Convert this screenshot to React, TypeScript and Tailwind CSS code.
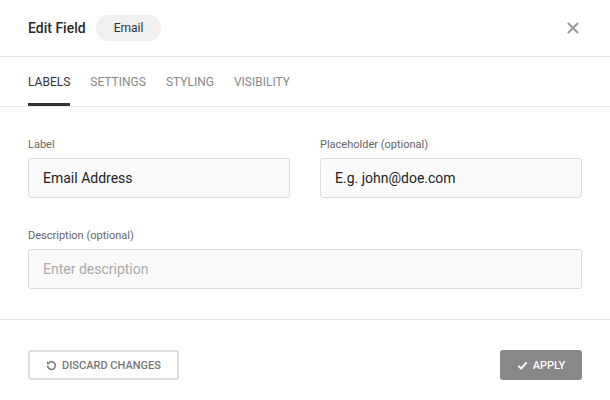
import * as React from "react"

export default function App() {
  return (
    <div className="w-[610px] h-[400px] bg-white text-[#333] font-[Roboto,sans-serif]">
      <div className="h-[57px] flex items-center justify-between px-[28px] border-b border-[#e6e6e6]">
        <div className="flex items-center gap-[10px]">
          <span className="text-[14px] leading-[16px] font-medium text-[#2a2a2a]">Edit Field</span>
          <span className="h-[26px] px-[18px] rounded-full bg-[#f0f0f0] text-[12px] leading-[14px] flex items-center text-[#333]">Email</span>
        </div>
        <svg width="12" height="12" viewBox="0 0 12 12" className="mr-[3px]">
          <path d="M1.5 1.5L10.5 10.5M10.5 1.5L1.5 10.5" stroke="#999" strokeWidth="2" strokeLinecap="round" />
        </svg>
      </div>
      <div className="h-[50px] flex gap-[20px] px-[28px] border-b border-[#e6e6e6] text-[12px] leading-[14px]">
        <div className="flex items-center border-b-[3px] border-[#333] pt-[3px] text-[#333]">LABELS</div>
        <div className="flex items-center text-[#888]">SETTINGS</div>
        <div className="flex items-center text-[#888]">STYLING</div>
        <div className="flex items-center text-[#888]">VISIBILITY</div>
      </div>
      <div className="px-[28px] pt-[31px] pb-[30px] border-b border-[#e6e6e6]">
        <div className="grid grid-cols-2 gap-[30px]">
          <div>
            <div className="text-[11px] leading-[13px] text-[#666] mb-[7px]">Label</div>
            <div className="h-[40px] rounded-[3px] border border-[#ddd] bg-[#fafafa] px-[14px] flex items-center text-[14px] leading-[16px] text-[#222]">Email Address</div>
          </div>
          <div>
            <div className="text-[11px] leading-[13px] text-[#666] mb-[7px]">Placeholder (optional)</div>
            <div className="h-[40px] rounded-[3px] border border-[#ddd] bg-[#fafafa] px-[14px] flex items-center text-[14px] leading-[16px] text-[#222]">E.g. john@doe.com</div>
          </div>
        </div>
        <div className="mt-[31px]">
          <div className="text-[11px] leading-[13px] text-[#666] mb-[7px]">Description (optional)</div>
          <div className="h-[40px] rounded-[3px] border border-[#ddd] bg-[#fafafa] px-[14px] flex items-center text-[14px] leading-[16px] text-[#aaa]">Enter description</div>
        </div>
      </div>
      <div className="px-[28px] pt-[30px] flex justify-between">
        <button className="h-[30px] w-[151px] rounded-[3px] border-2 border-[#ddd] flex items-center justify-center gap-[5px] text-[11px] leading-[13px] font-medium text-[#777]">
          <svg width="11" height="11" viewBox="0 0 12 12">
            <path d="M3 3.2A4.2 4.2 0 1 1 1.8 6" fill="none" stroke="#777" strokeWidth="1.6" />
            <path d="M1 1.2V4.6H4.4Z" fill="#777" />
          </svg>
          DISCARD CHANGES
        </button>
        <button className="h-[30px] w-[82px] rounded-[3px] bg-[#888] flex items-center justify-center gap-[5px] text-[11px] leading-[13px] font-medium text-white">
          <svg width="11" height="11" viewBox="0 0 12 12">
            <path d="M1.5 6.5L4.5 9.5L10.5 2.5" fill="none" stroke="#fff" strokeWidth="2" />
          </svg>
          APPLY
        </button>
      </div>
    </div>
  )
}
